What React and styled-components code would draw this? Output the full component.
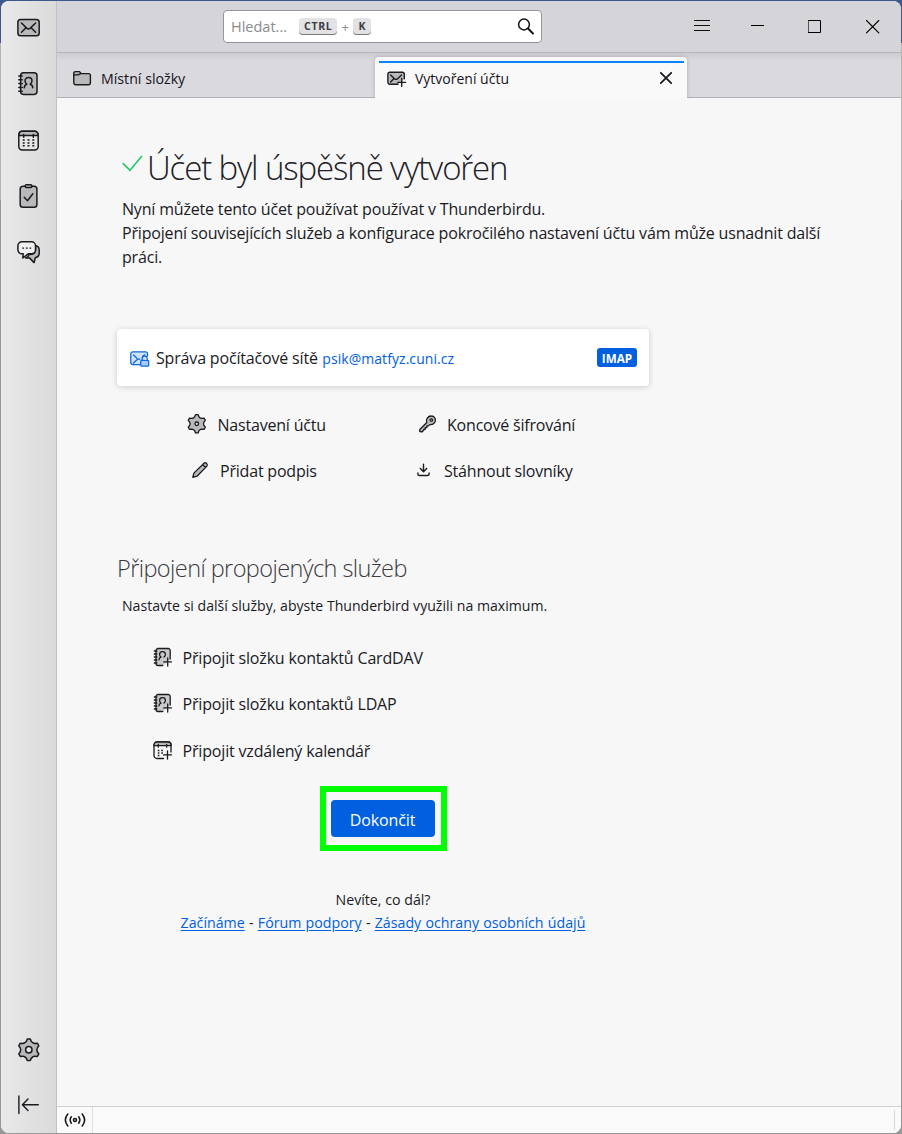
import React from 'react'
import styled, { createGlobalStyle } from 'styled-components'

const INK = '#1a1a1f'
const BLUE = '#0060df'
const FILL = '#b9b9bc'

const GlobalStyle = createGlobalStyle`
  * {
    box-sizing: border-box;
  }
  body {
    margin: 0;
    color: ${INK};
    font: 16px 'Open Sans', 'Noto Sans', sans-serif;
  }
  h1, h2, p {
    margin: 0;
    font-weight: 400;
  }
`

const Desktop = styled.div`
  height: 1134px;
  padding: 1px;
  background: linear-gradient(#3d588c 0 43px, #b4b4b6 43px 200px, #989898 200px);
`
const Window = styled.div`
  display: flex;
  height: 100%;
  overflow: hidden;
  border-radius: 8px;
  background: #f7f7f7;
`
const Sidebar = styled.nav`
  display: flex;
  flex-direction: column;
  gap: 32px;
  width: 56px;
  padding: 15px 0 15px 16px;
  border-right: 1px solid #c1c1c3;
  background: linear-gradient(90deg, #e9e9e9, #dadada);
`
const Spacer = styled.div`
  flex: 1;
`
const Main = styled.div`
  display: flex;
  flex: 1;
  flex-direction: column;
`
const Toolbar = styled.header`
  display: flex;
  height: 52px;
  padding: 9px 21px 0 166px;
  border-bottom: 1px solid #b6b5ba;
  background: #d5d4d9;
`
const Search = styled.div`
  display: flex;
  align-items: center;
  width: 319px;
  height: 33px;
  padding: 0 6px 0 7px;
  border: 1px solid #96959f;
  border-radius: 4px;
  background: #fff;
  color: #8a8a8e;
  font-size: 14.5px;
`
const Keys = styled.div`
  display: flex;
  align-items: center;
  gap: 4.5px;
  margin: 0 auto 0 12px;
  font-size: 13px;
`
const Kbd = styled.kbd`
  height: 17px;
  padding: 0 4.5px 0 5px;
  border-radius: 4px;
  background: #e2e2e5;
  box-shadow: inset 0 -1px #77777c;
  color: #3c3c44;
  font: 700 10.5px/16px 'Open Sans', sans-serif;
  letter-spacing: 0.7px;
`
const WindowButtons = styled.div`
  display: grid;
  grid-template-columns: 57px 57px 58px 14px;
  margin: 10px 0 0 auto;
`
const Tabs = styled.div`
  display: flex;
  height: 45px;
  border-bottom: 1px solid #b2b1b8;
  background: linear-gradient(#cdccd1, #dad9de 8px);
`
const Tab = styled.div`
  display: flex;
  align-items: center;
  width: 318px;
  padding: 6px 0 0 16px;
  color: #15141a;
  font-size: 14.2px;
  svg {
    margin-right: 8px;
  }
`
const ActiveTab = styled(Tab)`
  width: 312px;
  height: 41px;
  margin-top: 4px;
  padding: 0 3px 0 4px;
  border-radius: 4px 4px 0 0;
  background: #f9f9fa;
  box-shadow: 0 0 4px rgba(0, 0, 0, 0.2);
  clip-path: inset(-4px -4px 0);
  font-size: 14px;
`
const TabInner = styled.div`
  display: flex;
  flex: 1;
  align-self: stretch;
  align-items: center;
  margin-top: 4px;
  padding: 0 3px 5px 8px;
  border-top: 2px solid #0a84ff;
`
const Page = styled.main`
  flex: 1;
  padding: 45px 0 0 60px;
`
const Title = styled.h1`
  display: flex;
  align-items: flex-start;
  height: 48px;
  padding-left: 5px;
  color: #202026;
  font-size: 33px;
  font-weight: 300;
  letter-spacing: -1.12px;
  line-height: 49px;
  svg {
    margin: 11px 4px 0 0;
  }
`
const Intro = styled.p`
  width: 725px;
  margin: 6px 0 0 5px;
  letter-spacing: -0.18px;
  line-height: 24px;
`
const Column = styled.div`
  width: 532px;
`
const Account = styled.section`
  display: flex;
  align-items: center;
  height: 57px;
  margin-top: 60px;
  padding: 0 12px 0 13px;
  border-radius: 4px;
  background: #fff;
  box-shadow: 0 1px 6px rgba(0, 0, 0, 0.18);
  letter-spacing: -0.17px;
  svg {
    margin-top: 2px;
  }
`
const AccountName = styled.span`
  margin: 0 4.5px 0 6px;
`
const Email = styled.span`
  margin-top: 1px;
  color: ${BLUE};
  font-size: 14px;
  letter-spacing: 0.06px;
`
const Badge = styled.span`
  width: 40px;
  height: 19px;
  margin-left: auto;
  border-radius: 3px;
  background: ${BLUE};
  color: #fff;
  font-size: 11.7px;
  font-weight: 700;
  letter-spacing: 0;
  line-height: 20px;
  text-align: center;
`
const Actions = styled.div`
  display: grid;
  grid-template-columns: 229px 1fr;
  grid-auto-rows: 46px;
  margin-top: 16px;
  padding-left: 70px;
`
const Action = styled.a`
  display: flex;
  align-items: center;
  gap: ${p => p.$gap || 10.5}px;
  padding-left: ${p => p.$inset || 0}px;
  letter-spacing: -0.2px;
  svg {
    margin-top: -2px;
  }
`
const ServiceLink = styled(Action)`
  letter-spacing: -0.17px;
`
const Subtitle = styled.h2`
  margin: 58px 0 0;
  color: #3a3a40;
  font-size: 23.5px;
  font-weight: 300;
  letter-spacing: -0.58px;
  line-height: 32px;
`
const Hint = styled.p`
  margin: 12px 0 0 5px;
  font-size: 14.1px;
  line-height: 20px;
`
const Services = styled.div`
  display: grid;
  grid-auto-rows: 46.5px;
  margin-top: 18.5px;
  padding-left: 35.5px;
`
const Highlight = styled.div`
  width: 127px;
  height: 65px;
  margin: 11.5px auto 0 203px;
  padding: 8px 6px 8px 5px;
  border: 6px solid #0f0;
`
const Button = styled.button`
  display: block;
  width: 104px;
  height: 37px;
  padding: 3px 1px 0 0;
  border: 0;
  border-radius: 4px;
  background: ${BLUE};
  color: #fff;
  font: 16px 'Open Sans', sans-serif;
  letter-spacing: -0.1px;
`
const Help = styled.footer`
  margin-top: 37px;
  font-size: 14.2px;
  line-height: 23px;
  text-align: center;
`
const Links = styled.div`
  word-spacing: 0.6px;
`
const Link = styled.a`
  color: ${BLUE};
  text-decoration: underline;
  text-underline-offset: 2px;
`
const StatusBar = styled.div`
  display: flex;
  align-items: center;
  justify-content: space-between;
  height: 27px;
  padding-right: 6px;
  border-top: 1px solid #d0d0d2;
  background: #fafafa;
`
const StatusCell = styled.div`
  display: flex;
  align-items: center;
  width: 36px;
  height: 100%;
  padding-left: 7px;
  border-right: 1px solid #dedee0;
`
const Grip = styled.div`
  width: 1px;
  height: 20px;
  background: #d8d8da;
`
const Svg = styled.svg`
  flex-shrink: 0;
  fill: none;
  stroke: ${p => p.$color};
  stroke-linecap: round;
  stroke-linejoin: round;
`

const Icon = ({ w = 24, h = w, color = INK, sw = 1.5, children }) => (
  <Svg width={w} height={h} viewBox={`0 0 ${w} ${h}`} $color={color} strokeWidth={sw}>
    {children}
  </Svg>
)

// six rounded teeth, the first one pointing up
const gearPath = (c, outer, inner) => {
  const steps = [[-8, outer], [8, outer], [17, inner], [30, inner - 0.6], [43, inner]]
  const points = []
  for (let k = 0; k < 6; k++) {
    steps.forEach(([a, r]) => {
      const t = ((k * 60 + a - 90) * Math.PI) / 180
      points.push(`${(c + r * Math.cos(t)).toFixed(2)} ${(c + r * Math.sin(t)).toFixed(2)}`)
    })
  }
  return `M${points.join('L')}Z`
}

const Gear = ({ size, outer, inner, hole, sw }) => (
  <Icon w={size} sw={sw}>
    <path d={gearPath(size / 2 - 0.2, outer, inner)} fill={FILL} />
    <circle cx={size / 2 - 0.2} cy={size / 2 - 0.2} r={hole} fill="#e4e4e4" />
  </Icon>
)

const MailIcon = () => (
  <Icon>
    <rect x=".9" y="3.4" width="21.3" height="16.3" rx="2.8" fill={FILL} />
    <path d="M4.5 7l5.2 5.1c1 .9 2.6.9 3.6 0L18.6 7M4.5 16.2l4-4M18.6 16.2l-4-4" />
  </Icon>
)

const BookIcon = () => (
  <Icon>
    <rect x="3.6" y=".8" width="16.4" height="21.6" rx="2.8" fill={FILL} />
    <path d="M1.8 4h3.4M1.8 7.8h3.4M1.8 11.6h3.4M1.8 15.4h3.4M1.8 19.2h3.4" />
    <path d="M7.3 15.8c0-2.2.8-2.9 2.5-3.5C8.5 11.2 8 10 8 8.8 8 6.8 9.5 5.6 11.5 5.6s3.5 1.2 3.5 3.2c0 1.2-.5 2.4-1.8 3.5 1.7.6 2.5 1.3 2.5 3.5" />
  </Icon>
)

const CalendarIcon = () => (
  <Icon>
    <rect x="1.8" y="3.2" width="19.4" height="18.9" rx="3.5" fill="#e6e6e6" />
    <path d="M2 7.5v-1a3.3 3.3 0 0 1 3.3-3.300h12.400A3.300 3.300 0 0 1 21 6.500v1z" fill={FILL} />
    <path d="M6.7 6.5v2.7M16.3 6.5v2.7" />
    <path d="M5.7 12h2M10.5 12h2M15.3 12h2M5.7 14.9h2M10.5 14.9h2M15.3 14.9h2M5.7 17.8h2M10.5 17.8h2M15.3 17.8h2" strokeLinecap="butt" />
  </Icon>
)

const TasksIcon = () => (
  <Icon>
    <rect x="3.2" y="2.2" width="16.7" height="21" rx="2.8" fill={FILL} />
    <rect x="8.3" y=".8" width="6.5" height="2.8" rx="1" fill={FILL} />
    <path d="M7.2 13.3l3.3 3.5 5.3-7" />
  </Icon>
)

const ChatIcon = () => (
  <Icon>
    <path d="M18.5 5.5c2.4.5 3.7 2 3.7 4.4v3.2c0 2.4-1.2 3.9-3.3 4.400l-.6.2-1.200 4.900-4.700-4.700H8.600c2-.6 3-1.700 3.400-3.300 4.500 0 6.600-1.200 6.600-4.800z" fill={FILL} />
    <path d="M5 1.8h9.5a4 4 0 0 1 4 4v4a4 4 0 0 1-4 4h-3.3L5.8 18l.4-4.200H5a4 4 0 0 1-4.100-4v-4A4 4 0 0 1 5 1.800z" fill="#efefef" />
    <path d="M5.3 8.2h1.7M8.8 8.2h1.900M12.500 8.200h1.700" strokeWidth="1.3" strokeLinecap="butt" />
  </Icon>
)

const CollapseIcon = () => (
  <Icon sw={1.4}>
    <path d="M1.9 2v17.6M5.5 10.7h15.8M11 5l-5.6 5.7 5.6 5.7" />
  </Icon>
)

const SearchIcon = () => (
  <Icon w={18} sw={1.5} color="#111">
    <circle cx="7" cy="6.5" r="5.4" />
    <path d="M11 10.5l5 5" strokeWidth="1.9" />
  </Icon>
)

const FolderIcon = () => (
  <Icon w={20} h={18} sw={1.4}>
    <path d="M.8 13.8V4.3c0-1 .7-1.7 1.7-1.7h4l1.800 2h7.200c1.200 0 1.900.7 1.900 1.800v7.400c0 1.200-.8 2-2 2H2.800c-1.200 0-2-.8-2-2z" fill={FILL} />
    <path d="M1 5.9h4.2l2.400-1.300" />
  </Icon>
)

const MailPlusIcon = () => (
  <Icon w={20} h={18} sw={1.4}>
    <path d="M11 15.300H2.900a2 2 0 0 1-2-2V5.200a2 2 0 0 1 2-2h12.400a2 2 0 0 1 2 2v4.500" fill={FILL} />
    <path d="M3.600 6l3.900 3.700c.9.800 2.200.8 3.100 0L14.500 6M3.600 13l3-3M14.700 9.500v7.700M10.800 13.400h7.800" />
  </Icon>
)

const MailLockIcon = () => (
  <Icon w={20} h={18} sw={1.3} color="#1068df">
    <path d="M10 14.600H2.800a2 2 0 0 1-2-2V3.800a2 2 0 0 1 2-2h12.700a2 2 0 0 1 2 2V6" fill="#cfe2fb" />
    <path d="M3.500 5l4.300 4.100L3.500 13M7.800 9.100h2.100M14.500 4.900L13 6" />
    <rect x="10.7" y="10.3" width="8" height="5.8" rx="1.2" fill="#a9cbf7" />
    <path d="M12.200 10.200V8.500a2.500 2.500 0 0 1 5 0v1.700" />
  </Icon>
)

const KeyIcon = () => (
  <Icon w={18} sw={1.3}>
    <path d="M.8 14.500l7-7A4.700 4.700 0 0 1 12.300 1c2.300 0 4.100 1.800 4.100 4.200 0 2.700-2.300 4.700-5.600 4.400l-1.300 1.300H7.900v1.700H6.200v1.700l-1.200.2L3.300 16.800.8 16.500z" fill={FILL} />
    <circle cx="12.3" cy="5" r="1.2" fill="#f7f7f7" />
  </Icon>
)

const PencilIcon = () => (
  <Icon w={18} sw={1.3}>
    <path d="M1.800 16.400l1.100-4.300L13 2.200c1.900-1.300 4.100.9 2.900 2.900L6 15.200zM11.700 3.600l2.900 2.900" fill={FILL} />
  </Icon>
)

const DownloadIcon = () => (
  <Icon w={14} sw={1.4}>
    <path d="M6.500 1.300v7.200M3.300 5.500l3.200 3.200 3.200-3.200M.9 9.900v1c0 1 .6 1.600 1.600 1.600h8c1 0 1.600-.6 1.600-1.600v-1" />
  </Icon>
)

const BookPlusIcon = () => (
  <Icon w={20} sw={1.3}>
    <path d="M9.800 18.500H5a2 2 0 0 1-2-2v-13a2 2 0 0 1 2-2h10.200a2 2 0 0 1 2 2V12L14 15.500z" fill="#c9c9cb" stroke="none" />
    <path d="M9.800 18.500H5a2 2 0 0 1-2-2v-13a2 2 0 0 1 2-2h10.200a2 2 0 0 1 2 2V12" />
    <path d="M1.300 4h2.600M1.300 7h2.600M1.300 10h2.600M1.300 13h2.600M1.300 16h2.600M6 12.800c0-1.500.8-2.300 2-2.700-1.200-1-1.400-1.800-1.400-2.700 0-1.500 1.100-2.700 2.900-2.700s2.900 1.200 2.900 2.700c0 .9-.2 1.700-1.400 2.700M14.700 11v8M10.800 14.900h7.600" />
  </Icon>
)

const CalendarPlusIcon = () => (
  <Icon w={20} sw={1.3}>
    <path d="M10.500 18.500H4a3 3 0 0 1-3-3V5a3 3 0 0 1 3-3h11a3 3 0 0 1 3 3v7" />
    <path d="M1 5.700V5a3 3 0 0 1 3-3h11a3 3 0 0 1 3 3v.7z" fill={FILL} />
    <path d="M5.300 4.500v2.700M13.700 4.500v2.700M14.500 11v8M10.500 14.900h8" />
    <path d="M4.800 10.500h1.600M8.300 10.500h1.600M4.800 13h1.600M8.300 13h1.600M4.800 15.500h1.600" strokeLinecap="butt" />
  </Icon>
)

const SignalIcon = () => (
  <Icon w={22} h={18} sw={1.6}>
    <circle cx="11" cy="9" r="1.5" />
    <path d="M7.300 5.800c-1.400 2-1.400 4.400 0 6.400M14.700 5.800c1.400 2 1.400 4.400 0 6.400M3.800 3c-3 3.700-3 8.300 0 12M18.200 3c3 3.700 3 8.300 0 12" />
  </Icon>
)

export default () => (
  <>
    <GlobalStyle />
    <Desktop>
      <Window>
        <Sidebar>
          <MailIcon />
          <BookIcon />
          <CalendarIcon />
          <TasksIcon />
          <ChatIcon />
          <Spacer />
          <Gear size={24} outer={10.8} inner={8.7} hole={3.2} />
          <CollapseIcon />
        </Sidebar>
        <Main>
          <Toolbar>
            <Search>
              Hledat...
              <Keys>
                <Kbd>CTRL</Kbd>+<Kbd>K</Kbd>
              </Keys>
              <SearchIcon />
            </Search>
            <WindowButtons>
              <Icon w={16} h={13} sw={1.2} color="#111">
                <path d="M.5.5h15M.5 5.5h15M.5 10.5h15" />
              </Icon>
              <Icon w={14} sw={1} color="#000">
                <path d="M0 5.5h13" strokeLinecap="butt" />
              </Icon>
              <Icon w={14} sw={1} color="#000">
                <path d="M.5.5h12v12H.5z" strokeLinejoin="miter" />
              </Icon>
              <Icon w={14} sw={1.1} color="#000">
                <path d="M.5.5l12.3 12.3M12.8.5L.5 12.8" />
              </Icon>
            </WindowButtons>
          </Toolbar>
          <Tabs>
            <Tab>
              <FolderIcon />
              Místní složky
            </Tab>
            <ActiveTab>
              <TabInner>
                <MailPlusIcon />
                Vytvoření účtu
                <Spacer />
                <Icon w={14} sw={1.8}>
                  <path d="M1.8 1.8l10.4 10.4M12.2 1.8L1.8 12.2" />
                </Icon>
              </TabInner>
            </ActiveTab>
          </Tabs>
          <Page>
            <Title>
              <Icon w={21} h={18} sw={1.7} color="#2ac769">
                <path d="M1.3 9.7l6.7 6.6L19.5 2.5" />
              </Icon>
              Účet byl úspěšně vytvořen
            </Title>
            <Intro>
              Nyní můžete tento účet používat používat v Thunderbirdu.
              <br />
              Připojení souvisejících služeb a konfigurace pokročilého nastavení účtu vám může usnadnit další práci.
            </Intro>
            <Column>
              <Account>
                <MailLockIcon />
                <AccountName>Správa počítačové sítě</AccountName>
                <Email>psik@matfyz.cuni.cz</Email>
                <Badge>IMAP</Badge>
              </Account>
              <Actions>
                <Action>
                  <Gear size={20} outer={9.2} inner={7.3} hole={1.8} sw={1.3} />
                  Nastavení účtu
                </Action>
                <Action $inset={3} $gap={10}>
                  <KeyIcon />
                  Koncové šifrování
                </Action>
                <Action $inset={4} $gap={11}>
                  <PencilIcon />
                  Přidat podpis
                </Action>
                <Action $inset={1} $gap={13}>
                  <DownloadIcon />
                  Stáhnout slovníky
                </Action>
              </Actions>
              <Subtitle>Připojení propojených služeb</Subtitle>
              <Hint>Nastavte si další služby, abyste Thunderbird využili na maximum.</Hint>
              <Services>
                <ServiceLink $gap={10}>
                  <BookPlusIcon />
                  Připojit složku kontaktů CardDAV
                </ServiceLink>
                <ServiceLink $gap={10}>
                  <BookPlusIcon />
                  Připojit složku kontaktů LDAP
                </ServiceLink>
                <ServiceLink $gap={10}>
                  <CalendarPlusIcon />
                  Připojit vzdálený kalendář
                </ServiceLink>
              </Services>
              <Highlight>
                <Button>Dokončit</Button>
              </Highlight>
              <Help>
                Nevíte, co dál?
                <Links>
                  <Link>Začínáme</Link> - <Link>Fórum podpory</Link> - <Link>Zásady ochrany osobních údajů</Link>
                </Links>
              </Help>
            </Column>
          </Page>
          <StatusBar>
            <StatusCell>
              <SignalIcon />
            </StatusCell>
            <Grip />
          </StatusBar>
        </Main>
      </Window>
    </Desktop>
  </>
)
